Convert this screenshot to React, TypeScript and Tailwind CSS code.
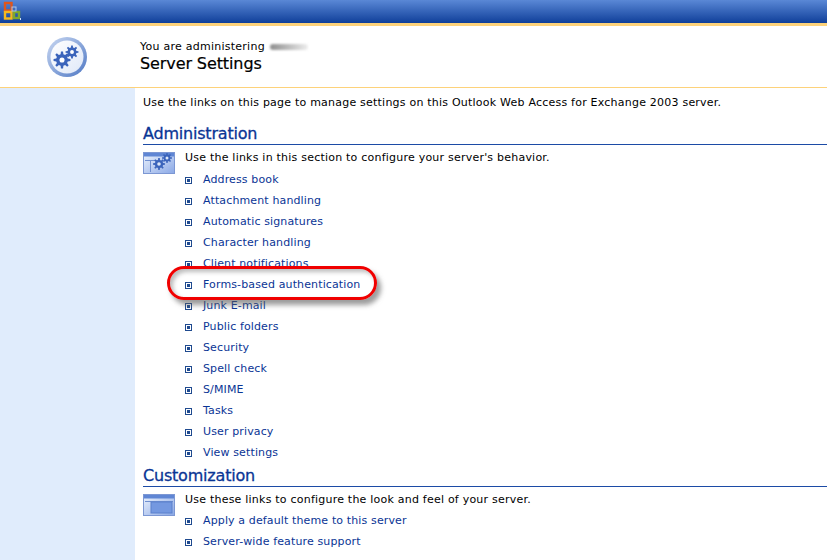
const adminLinks = [
  "Address book",
  "Attachment handling",
  "Automatic signatures",
  "Character handling",
  "Client notifications",
  "Forms-based authentication",
  "Junk E-mail",
  "Public folders",
  "Security",
  "Spell check",
  "S/MIME",
  "Tasks",
  "User privacy",
  "View settings",
];

const customLinks = ["Apply a default theme to this server", "Server-wide feature support"];

function OfficeLogo() {
  return (
    <svg width="22" height="21" viewBox="0 0 22 21" fill="none" aria-hidden="true">
      <rect x="5" y="3" width="6.5" height="7.5" stroke="#e0561c" strokeWidth="2.4" />
      <rect x="5" y="12" width="6.5" height="6.5" stroke="#f6b81c" strokeWidth="2.4" />
      <rect x="14" y="12" width="5" height="6" stroke="#7fa82c" strokeWidth="2.4" />
      <rect x="12" y="7" width="4" height="4" stroke="#a9c6ec" strokeWidth="1" />
      <rect x="20" y="18" width="1" height="2" fill="#cfe0f5" />
    </svg>
  );
}

// 8-tooth cog outline
function gearPoints(cx: number, cy: number, r: number) {
  const pts: string[] = [];
  for (let i = 0; i < 8; i++) {
    const a = (i * Math.PI) / 4;
    const step = Math.PI / 4;
    [
      [a - step * 0.3, r * 0.7],
      [a - step * 0.16, r],
      [a + step * 0.16, r],
      [a + step * 0.3, r * 0.7],
    ].forEach(([t, d]) => {
      pts.push(`${(cx + Math.cos(t) * d).toFixed(2)},${(cy + Math.sin(t) * d).toFixed(2)}`);
    });
  }
  return pts.join(" ");
}

function Gear({ cx, cy, r, hole = "#ffffff" }: { cx: number; cy: number; r: number; hole?: string }) {
  return (
    <g>
      <polygon points={gearPoints(cx, cy, r)} fill="#3b64bb" />
      <circle cx={cx} cy={cy} r={r * 0.3} fill={hole} />
    </g>
  );
}

function SettingsBadge() {
  return (
    <svg width="42" height="42" viewBox="0 0 42 42" aria-hidden="true">
      <defs>
        <linearGradient id="ring" x1="0" y1="0" x2="1" y2="1">
          <stop offset="0" stopColor="#c9d8f2" />
          <stop offset="1" stopColor="#4f78c4" />
        </linearGradient>
        <linearGradient id="face" x1="0" y1="0" x2="1" y2="1">
          <stop offset="0" stopColor="#ffffff" />
          <stop offset="1" stopColor="#dfe8f8" />
        </linearGradient>
      </defs>
      <circle cx="21" cy="21" r="20" fill="url(#ring)" />
      <circle cx="21" cy="21" r="16.5" fill="url(#face)" />
      <Gear cx={26} cy={16} r={6.5} />
      <Gear cx={16} cy={24} r={8.5} />
    </svg>
  );
}

function SectionIcon({ gears }: { gears: boolean }) {
  return (
    <svg width="32" height="22" viewBox="0 0 32 22" aria-hidden="true" className="shrink-0">
      <defs>
        <linearGradient id={gears ? "paneA" : "paneB"} x1="0" y1="0" x2="1" y2="1">
          <stop offset="0" stopColor="#eef4fd" />
          <stop offset="1" stopColor="#8aa8e6" />
        </linearGradient>
      </defs>
      <rect x="0.5" y="0.5" width="31" height="21" fill={`url(#${gears ? "paneA" : "paneB"})`} stroke="#7c97d3" />
      <rect x="1" y="1" width="30" height="3.5" fill="#5f86d4" />
      {gears ? (
        <g>
          <path d="M2 8.5H16M7.5 8.5V20" stroke="#6f8fd0" fill="none" />
          <Gear cx={24} cy={6} r={5} hole="#dbe6f8" />
          <Gear cx={16} cy={12} r={6} hole="#dbe6f8" />
        </g>
      ) : (
        <g>
          <path d="M2 7.5H30" stroke="#6f8fd0" fill="none" />
          <rect x="8" y="8" width="21" height="11" fill="#7498e0" stroke="#5a80cc" />
        </g>
      )}
    </svg>
  );
}

function LinkRow({ label }: { label: string }) {
  return (
    <li className="flex h-[21px] items-center pl-[42px]">
      <span className="flex h-[7px] w-[7px] shrink-0 items-center justify-center border border-[#1f4a8f] bg-white">
        <span className="h-[3px] w-[3px] bg-[#1f4a8f]" />
      </span>
      <span className="ml-[11px] tracking-[0.13px] text-[#0a3595]">{label}</span>
    </li>
  );
}

function Section({
  title,
  intro,
  gears,
  links,
  introHeight,
}: {
  title: string;
  intro: string;
  gears: boolean;
  links: string[];
  introHeight: string;
}) {
  return (
    <section>
      <h2 className="h-[21px] border-b border-[#1c4ba6] text-[16px] font-normal leading-[20px] tracking-[-0.2px] text-[#0a3595] [-webkit-text-stroke:0.3px_#0a3595]">
        {title}
      </h2>
      <div className={`mt-[7px] flex ${introHeight}`}>
        <SectionIcon gears={gears} />
        <p className="ml-[10px] leading-[11px]">{intro}</p>
      </div>
      <ul>
        {links.map((l) => (
          <LinkRow key={l} label={l} />
        ))}
      </ul>
    </section>
  );
}

export default function App() {
  return (
    <div className="relative flex h-[560px] w-[827px] flex-col overflow-hidden bg-white font-['DejaVu_Sans',sans-serif] text-[11px] tracking-[0.22px] text-black">
      {/* Top bar */}
      <div className="h-[23px] shrink-0 bg-gradient-to-b from-[#5a88d6] to-[#0f3f9a]">
        <OfficeLogo />
      </div>
      <div className="h-[3px] shrink-0 bg-[#fdd27a]" />

      {/* Title */}
      <header className="flex h-[62px] shrink-0 items-center border-b border-[#fdd27a]">
        <div className="flex w-[132px] justify-center pl-[1px]">
          <SettingsBadge />
        </div>
        <div className="ml-[8px]">
          <p className="flex items-center leading-[14px] tracking-[0.25px]">
            You are administering
            <span className="ml-[5px] h-[6px] w-[38px] rounded-full bg-gradient-to-r from-[#8f8f8f] to-[#eeeeee] blur-[1px]" />
          </p>
          <h1 className="text-[16px] font-normal leading-[20px] tracking-[-0.1px] [-webkit-text-stroke:0.2px_#000]">Server Settings</h1>
        </div>
      </header>

      <div className="flex min-h-0 flex-1">
        <aside className="w-[135px] bg-[#e0ecfc]" />
        <main className="flex-1 pl-[8px]">
          <p className="mt-[8px] h-[18px] leading-[14px]">
            Use the links on this page to manage settings on this Outlook Web Access for Exchange 2003 server.
          </p>
          <div className="mt-[10px]">
            <Section
              title="Administration"
              intro="Use the links in this section to configure your server's behavior."
              gears
              links={adminLinks}
              introHeight="h-[18px]"
            />
          </div>
          <div className="mt-[2px]">
            <Section
              title="Customization"
              intro="Use these links to configure the look and feel of your server."
              gears={false}
              links={customLinks}
              introHeight="h-[17px]"
            />
          </div>
        </main>
      </div>

      {/* Hand-drawn highlight */}
      <div className="absolute left-[167px] top-[266px] h-[34px] w-[210px] rounded-full border-[3px] border-[#f00000] shadow-[4px_5px_5px_rgba(90,90,90,0.6),inset_3px_3px_4px_rgba(90,90,90,0.4)]" />
    </div>
  );
}
